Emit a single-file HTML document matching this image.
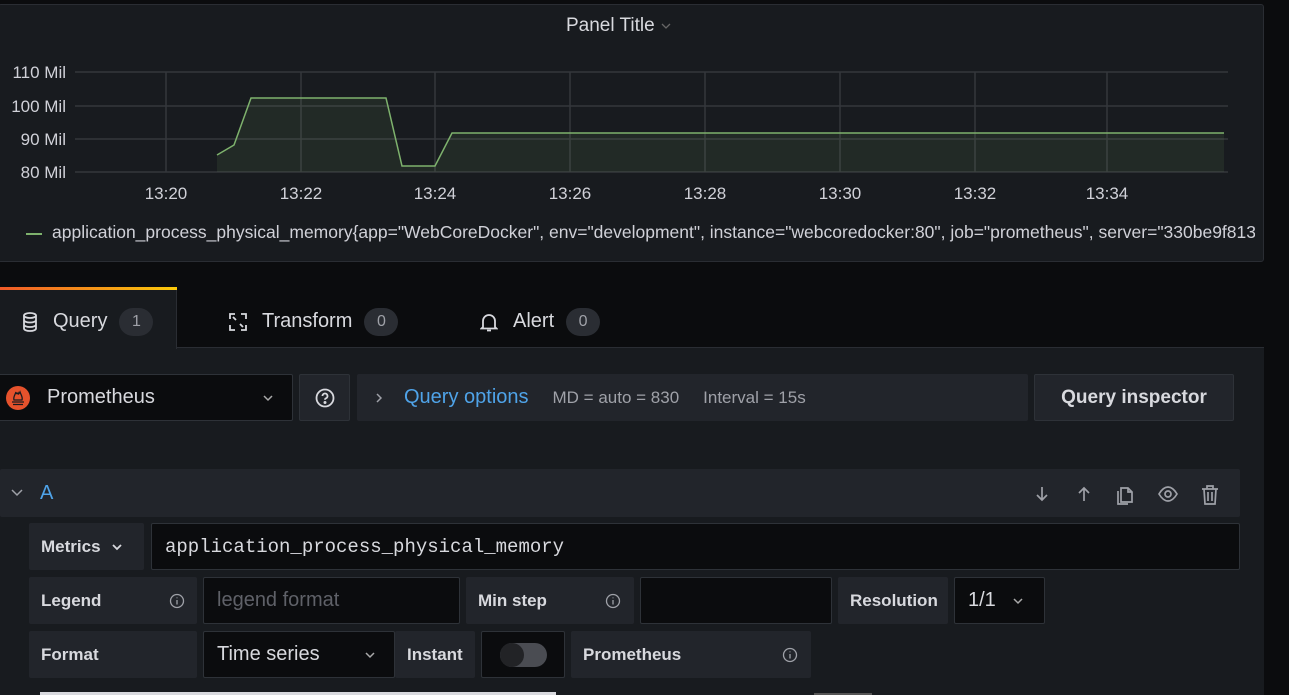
<!DOCTYPE html>
<html><head><meta charset="utf-8"><style>
*{box-sizing:border-box;margin:0;padding:0}
body{width:1289px;height:695px;background:#0b0c0e;font-family:"Liberation Sans",sans-serif;color:#ccccdc;position:relative;overflow:hidden}
.abs{position:absolute}
.panel{left:-2px;top:4px;width:1266px;height:258px;background:#181b1f;border:1px solid #2a2d33;border-radius:3px}
.lbl{font-size:17.5px;color:#d0d1d8}
.tab{position:absolute;top:291px;height:61px;display:flex;align-items:center;font-size:20px;color:#d8d9de}
.badge{display:inline-block;background:#2a2d33;border-radius:14px;height:28px;line-height:28px;min-width:34px;text-align:center;font-size:16px;color:#9fa1a8;margin-left:12px}
.box{position:absolute;border-radius:2px}
.fl{background:#22252b;font-size:17px;font-weight:bold;color:#d8d9de;display:flex;align-items:center;padding-left:12px}
.inp{background:#0b0c0e;border:1px solid #2e3238;display:flex;align-items:center;padding-left:13px;font-size:20px;color:#d8d9de}
</style></head><body>
<div class="abs panel"></div>
<div class="abs" style="left:566px;top:15px;font-size:19px;color:#d8d9de">Panel Title <svg width="12" height="10" viewBox="0 0 12 10"><path d="M2 3l4 4 4-4" fill="none" stroke="#666" stroke-width="1.3"/></svg></div>
<svg class="abs" style="left:0;top:0" width="1264" height="262">
<g stroke="#34373c" stroke-width="1.5">
<line x1="75" y1="72" x2="1228" y2="72"/><line x1="75" y1="106" x2="1228" y2="106"/><line x1="75" y1="139" x2="1228" y2="139"/><line x1="75" y1="172" x2="1228" y2="172"/>
<line x1="166" y1="72" x2="166" y2="172"/><line x1="301" y1="72" x2="301" y2="172"/><line x1="435" y1="72" x2="435" y2="172"/><line x1="570" y1="72" x2="570" y2="172"/><line x1="705" y1="72" x2="705" y2="172"/><line x1="840" y1="72" x2="840" y2="172"/><line x1="975" y1="72" x2="975" y2="172"/><line x1="1107" y1="72" x2="1107" y2="172"/>
</g>
<polygon points="217,155 234,145 251,98 386,98 402,166 435,166 452,133 1224,133 1224,172 217,172" fill="#7eb26d" fill-opacity="0.1"/>
<polyline points="217,155 234,145 251,98 386,98 402,166 435,166 452,133 1224,133" fill="none" stroke="#7eb26d" stroke-width="1.5"/>
<g font-family="Liberation Sans" font-size="17" fill="#d0d1d8" text-anchor="end">
<text x="66" y="78">110 Mil</text><text x="66" y="112">100 Mil</text><text x="66" y="145">90 Mil</text><text x="66" y="178">80 Mil</text></g>
<g font-family="Liberation Sans" font-size="17" fill="#d0d1d8" text-anchor="middle">
<text x="166" y="199">13:20</text><text x="301" y="199">13:22</text><text x="435" y="199">13:24</text><text x="570" y="199">13:26</text><text x="705" y="199">13:28</text><text x="840" y="199">13:30</text><text x="975" y="199">13:32</text><text x="1107" y="199">13:34</text></g>
<line x1="26" y1="234" x2="42" y2="234" stroke="#7eb26d" stroke-width="2"/>
</svg>
<div class="abs lbl" style="left:52px;top:222px;white-space:nowrap;width:1203px;overflow:hidden">application_process_physical_memory{app="WebCoreDocker", env="development", instance="webcoredocker:80", job="prometheus", server="330be9f813</div>

<div class="abs" style="left:0;top:347px;width:1264px;height:348px;background:#181b1f;border-top:1px solid #2a2d33"></div>
<div class="abs" style="left:0;top:287px;width:177px;height:62px;background:#181b1f;border-right:1px solid #2a2d33"></div>
<div class="abs" style="left:0;top:287px;width:177px;height:3px;background:linear-gradient(90deg,#f05a28,#fbca0a)"></div>
<div class="tab" style="left:20px"><svg width="20" height="22" viewBox="0 0 20 22" fill="none" stroke="#d8d9de" stroke-width="1.8"><ellipse cx="10" cy="4.5" rx="6" ry="2.5"/><path d="M4 4.5v13c0 1.4 2.7 2.5 6 2.5s6-1.1 6-2.5v-13M4 9c0 1.4 2.7 2.5 6 2.5s6-1.1 6-2.5M4 13.5c0 1.4 2.7 2.5 6 2.5s6-1.1 6-2.5"/></svg><span style="margin-left:13px">Query</span><span class="badge">1</span></div>
<div class="tab" style="left:228px"><svg width="20" height="20" viewBox="0 0 20 20" fill="none" stroke="#d8d9de" stroke-width="1.8"><path d="M2 7V2h5M18 7V2h-5M2 13v5h5M18 13v5h-5M5 5l3 3M15 15l-3-3"/></svg><span style="margin-left:14px">Transform</span><span class="badge">0</span></div>
<div class="tab" style="left:480px"><svg width="18" height="20" viewBox="0 0 18 20" fill="none" stroke="#d8d9de" stroke-width="1.8"><path d="M3 15V9a6 6 0 0 1 12 0v6l1.5 1.5h-15zM7 18.5h4"/></svg><span style="margin-left:15px">Alert</span><span class="badge">0</span></div>

<div class="box inp" style="left:-2px;top:374px;width:295px;height:47px;padding-left:6px"><svg width="26" height="26" viewBox="0 0 26 26"><circle cx="13" cy="13" r="12" fill="#e6522c"/><path d="M7 17h12M8 19.5h10M9 15c-1-3 1-5 2-8 0 2 1 2 2 1 0 2 1 1 2-1 1 3 3 5 2 8z" stroke="#181b1f" stroke-width="1.3" fill="none"/></svg><span style="margin-left:16px">Prometheus</span><svg style="position:absolute;right:18px" width="12" height="10" viewBox="0 0 12 10"><path d="M2 3l4 4 4-4" fill="none" stroke="#aaa" stroke-width="1.5"/></svg></div>
<div class="box" style="left:299px;top:374px;width:51px;height:47px;background:#22252b;border:1px solid #2e3238;display:flex;align-items:center;justify-content:center"><svg width="20" height="20" viewBox="0 0 20 20" fill="none" stroke="#d8d9de" stroke-width="1.8"><circle cx="10" cy="10" r="8.5"/><path d="M7.5 8a2.5 2.5 0 1 1 3.5 2.3c-.7.3-1 .8-1 1.5"/><circle cx="10" cy="14.5" r=".6" fill="#d8d9de"/></svg></div>
<div class="box" style="left:357px;top:374px;width:671px;height:47px;background:#22252b;display:flex;align-items:center;font-size:17px;color:#9fa1a8"><svg style="margin-left:17px" width="10" height="12" viewBox="0 0 10 12"><path d="M3 2l4 4-4 4" fill="none" stroke="#9fa1a8" stroke-width="1.5"/></svg><span style="margin-left:20px;color:#4fa3e8;font-size:20px">Query options</span><span style="margin-left:24px">MD = auto = 830</span><span style="margin-left:24px">Interval = 15s</span></div>
<div class="box" style="left:1034px;top:374px;width:200px;height:47px;background:#22252b;border:1px solid #2e3238;display:flex;align-items:center;justify-content:center;font-size:19px;font-weight:bold;color:#d8d9de">Query inspector</div>

<div class="box" style="left:0;top:469px;width:1240px;height:48px;background:#22252b"></div>
<svg class="abs" style="left:10px;top:488px" width="14" height="10" viewBox="0 0 14 10"><path d="M2 2l5 5 5-5" fill="none" stroke="#9fa1a8" stroke-width="1.5"/></svg>
<div class="abs" style="left:40px;top:482px;font-size:20px;color:#4fa3e8">A</div>
<svg class="abs" style="left:1030px;top:481px" width="200" height="26" viewBox="0 0 200 26" fill="none" stroke="#9fa1a8" stroke-width="1.7">
<path d="M12 6v13M7 14l5 5 5-5"/><path d="M54 20V7M49 12l5-5 5 5"/>
<path d="M91 7h7l4 4v10h-11z M88 10v13h10"/><path d="M98 7v4h4"/>
<path d="M129 13c3-5 6-7 9-7s6 2 9 7c-3 5-6 7-9 7s-6-2-9-7z"/><circle cx="138" cy="13" r="3"/>
<path d="M172 8h16M177 8V5h6v3M174 8l1 15h10l1-15M178 11v9M182 11v9"/></svg>

<div class="box fl" style="left:29px;top:523px;width:115px;height:47px">Metrics <svg style="margin-left:10px" width="12" height="10" viewBox="0 0 12 10"><path d="M2 3l4 4 4-4" fill="none" stroke="#d8d9de" stroke-width="1.8"/></svg></div>
<div class="box inp" style="left:151px;top:523px;width:1089px;height:47px;font-family:'Liberation Mono',monospace;font-size:19px">application_process_physical_memory</div>

<div class="box fl" style="left:29px;top:577px;width:168px;height:47px">Legend<svg style="position:absolute;left:140px" width="16" height="16" viewBox="0 0 16 16" fill="none" stroke="#9fa1a8" stroke-width="1.3"><circle cx="8" cy="8" r="6.5"/><path d="M8 7v4.5M8 4.5v.8"/></svg></div>
<div class="box inp" style="left:203px;top:577px;width:257px;height:47px;color:#5f6168">legend format</div>
<div class="box fl" style="left:466px;top:577px;width:168px;height:47px">Min step<svg style="position:absolute;left:139px" width="16" height="16" viewBox="0 0 16 16" fill="none" stroke="#9fa1a8" stroke-width="1.3"><circle cx="8" cy="8" r="6.5"/><path d="M8 7v4.5M8 4.5v.8"/></svg></div>
<div class="box inp" style="left:640px;top:577px;width:192px;height:47px"></div>
<div class="box fl" style="left:838px;top:577px;width:110px;height:47px">Resolution</div>
<div class="box inp" style="left:954px;top:577px;width:91px;height:47px">1/1<svg style="margin-left:16px" width="12" height="10" viewBox="0 0 12 10"><path d="M2 3l4 4 4-4" fill="none" stroke="#aaa" stroke-width="1.5"/></svg></div>

<div class="box fl" style="left:29px;top:631px;width:168px;height:47px">Format</div>
<div class="box inp" style="left:203px;top:631px;width:192px;height:47px">Time series<svg style="position:absolute;right:18px" width="12" height="10" viewBox="0 0 12 10"><path d="M2 3l4 4 4-4" fill="none" stroke="#aaa" stroke-width="1.5"/></svg></div>
<div class="box fl" style="left:395px;top:631px;width:80px;height:47px">Instant</div>
<div class="box inp" style="left:481px;top:631px;width:84px;height:47px;padding-left:18px"><div style="width:47px;height:24px;border-radius:12px;background:#4a4c52;position:relative"><div style="position:absolute;left:0;top:0;width:24px;height:24px;border-radius:12px;background:#222326"></div></div></div>
<div class="box fl" style="left:571px;top:631px;width:240px;height:47px">Prometheus<svg style="position:absolute;left:211px" width="16" height="16" viewBox="0 0 16 16" fill="none" stroke="#9fa1a8" stroke-width="1.3"><circle cx="8" cy="8" r="6.5"/><path d="M8 7v4.5M8 4.5v.8"/></svg></div>
<div class="abs" style="left:40px;top:692px;width:516px;height:3px;background:#d8d9de"></div>
<div class="abs" style="left:814px;top:693px;width:58px;height:2px;background:#555"></div>
</body></html>
